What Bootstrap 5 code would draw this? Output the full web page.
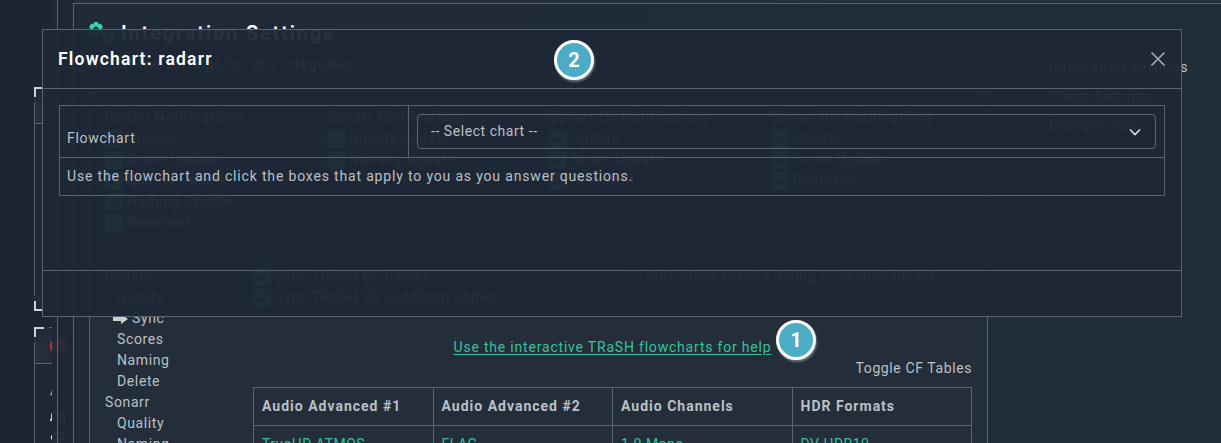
<!DOCTYPE html>
<html lang="en" data-bs-theme="dark">
<head>
<meta charset="utf-8">
<title>Integration Settings</title>
<meta name="viewport" content="width=device-width, initial-scale=1">
<link href="https://cdn.jsdelivr.net/npm/bootstrap@5.3.0/dist/css/bootstrap.min.css" rel="stylesheet">
<style>
:root{--line:#59626d;--txt:#bcc0c4;--mint:#34c39c}
body{font:14px/21px Roboto,"Liberation Sans",sans-serif;letter-spacing:.72px;color:var(--txt);background:linear-gradient(90deg,#1b2632,#1d2a36);height:443px;overflow:hidden;white-space:nowrap;position:relative}
.side{padding:87px 0 0 34px;width:300px;height:443px;overflow:hidden}
.widget{position:relative;border:1px solid var(--line);background:rgba(255,255,255,.01)}
.widget .cap{height:36px;border-bottom:1px solid var(--line);background:rgba(255,255,255,.03)}
.widget::before,.widget::after{content:"";position:absolute;left:-1px;width:15px;height:15px;background:linear-gradient(#cfd2d5,#cfd2d5) 0 0/10px 2px no-repeat,linear-gradient(#cfd2d5,#cfd2d5) 0 0/2px 10px no-repeat,#202b37}
.widget::before{top:-1px}
.widget::after{bottom:-1px;transform:scaleY(-1)}
.w1{height:224px;margin-bottom:16px}.w2{height:240px}
.outer{position:absolute;inset:0 0 0 52px;background:rgba(31,39,53,.96);padding-left:5px;overflow:hidden}
.pane{height:443px;border-left:1px solid var(--line);padding:3px 0 0 15px}
.page-pane{height:440px;border:solid var(--line);border-width:1px 0 0 1px;padding-left:15px;background:linear-gradient(90deg,#202a37,#202d39)}
.strip{height:3px;background:#25303c;position:absolute;top:0;left:22px;right:0}
.title{font-size:20px;font-weight:600;line-height:24px;color:#fff;letter-spacing:1.85px;padding-top:17px;height:50px}
.sub{height:37px;letter-spacing:.88px}
.box{width:899px;height:352px;overflow:hidden;border:1px solid var(--line);border-bottom:0;background:#242e3b;padding:15px 15px 0;position:relative}
.box::before,.box::after{content:"";position:absolute;top:-1px;width:10px;height:10px;border:2px solid #cfd2d5;border-bottom:0}
.box::before{left:-1px;border-right:0}.box::after{right:-1px;border-left:0}
.cols{display:grid;grid-template-columns:repeat(4,222px);height:127px}
.chk{display:flex;align-items:center;height:21px;gap:4px}
.chk i{width:18px;height:18px;border-radius:3px;background:#20b98c;display:inline-flex;align-items:center;justify-content:center;flex:none}
.chk i.off{background:transparent;border:1px solid var(--line)}
.rule{height:1px;background:var(--line);margin:14px 0 17px}
.menu{width:148px;letter-spacing:.62px}.menu .in{padding-left:12px}
.opts{display:grid;grid-template-columns:370px 348px;height:42px}
.help{color:var(--mint);text-decoration:underline;text-underline-offset:2px;letter-spacing:.8px}
.toggle{letter-spacing:.6px;margin-bottom:8px}
.cf{width:719px;table-layout:fixed;border-collapse:collapse}
.cf th,.cf td{border:1px solid #5d6470;height:38px;padding:0 8px;width:25%}
.cf th{font-weight:700;letter-spacing:1px}.cf td{color:var(--mint);letter-spacing:.5px}
.rnav{padding-left:61px;padding-top:53px;letter-spacing:.88px}
.rnav div{height:29px}
.dlg{position:absolute;left:42px;top:29px;width:1140px;height:288px;background:rgba(31,39,53,.95);border:1px solid var(--line)}
.dlg-head{height:59px;border-bottom:1px solid var(--line);padding:0 15px;color:#fff}
.dlg-head b{font-size:17.5px;font-weight:600;letter-spacing:1.2px}
.dlg-body{height:182px;border-bottom:1px solid var(--line);padding:16px}
.grid-t{border:1px solid var(--line);height:91px;width:1106px}
.grid-t .r1{height:52px;border-bottom:1px solid var(--line)}
.grid-t .c1{width:349px;border-right:1px solid var(--line);padding:11px 0 0 7px;line-height:42px;height:51px}
.note{padding:8px 7px;letter-spacing:.83px}
.pick{margin:8px;flex:1;height:35px;border:1px solid #5c6570;border-radius:4px;padding:0 14px 0 13px;letter-spacing:.55px}
.pin{position:absolute;width:40px;height:40px;border-radius:50%;border:3px solid #fff;background:#4bacc6;color:#fff;font-weight:700;font-size:20px;letter-spacing:0;display:flex;align-items:center;justify-content:center;box-shadow:1px 2px 2px rgba(190,190,190,.45)}
</style>
<script src="https://cdn.jsdelivr.net/npm/bootstrap@5.3.0/dist/js/bootstrap.bundle.min.js"></script>
</head>
<body>
<svg width="0" height="0" class="position-absolute"><defs>
<symbol id="tick" viewBox="0 0 12 12"><path d="M2 6.200 4.800 9 10 3.500" fill="none" stroke="#152029" stroke-width="2.200"/></symbol>
<symbol id="gear" viewBox="0 0 14 14"><path fill-rule="evenodd" fill="#3cd2a5" d="M5 0h4l.5 2.200 2.300-.6L14 5l-1.700 2L14 9l-2.200 3.400-2.300-.6L9 14H5l-.5-2.200-2.300.6L0 9l1.700-2L0 5l2.200-3.400 2.300.6zM7 4.500a2.500 2.500 0 1 0 0 5 2.500 2.500 0 0 0 0-5z"/></symbol>
</defs></svg>

<div class="side">
  <div class="widget w1"><div class="cap"></div></div>
  <div class="widget w2"><div class="cap d-flex align-items-center" style="padding-left:15px">
    <svg width="20" height="20" viewBox="0 0 20 20"><circle cx="10" cy="10" r="10" fill="#e5262b"/><ellipse cx="10" cy="11.500" rx="6" ry="4.300" fill="none" stroke="#fff" stroke-width="1.300"/><circle cx="7.500" cy="11" r="1.100" fill="#fff"/><circle cx="12.500" cy="11" r="1.100" fill="#fff"/><path d="M7.500 13.500q2.500 1.500 5 0M10 7l1-4 3 .7" stroke="#fff" fill="none"/><circle cx="14.500" cy="4" r="1.200" fill="#fff"/></svg></div>
    <div class="pt-3" style="padding-left:15px"><div>/r/organizr</div>
      <svg class="d-block" style="margin-top:8px" width="16" height="36" viewBox="0 0 16 36" fill="none" stroke="#ddd" stroke-width="1.700"><path d="M2 9 1 11l3-1.500h3a4 3.500 0 1 0-5-3zM11 5a3.500 3.500 0 0 1 3 5l1 2.500-3-1a4 3 0 0 1-5-1M7 27l3-3a3 3 0 0 1 4 4l-3 3a3 3 0 0 1-4-1M9 28l-3 3a3 3 0 0 1-4-4l3-3a3 3 0 0 1 4 1"/></svg></div>
  </div>
</div>

<div class="outer"><div class="strip"></div><div class="pane"><div class="page-pane d-flex">
  <div>
    <div class="title d-flex"><svg width="28" height="22" viewBox="0 0 28 22" style="margin-right:4px;margin-top:1px"><use href="#gear" width="14" height="14"/><use href="#gear" x="13" y="8" width="13" height="13"/></svg>Integration Settings</div>
    <div class="sub">Adjust the settings for this integration</div>
    <div class="box">
      <div class="cols">
        <div>Radarr Notifications
          <div class="chk"><i><svg width="12" height="12"><use href="#tick"/></svg></i>Update</div>
          <div class="chk"><i><svg width="12" height="12"><use href="#tick"/></svg></i>Score Update</div>
          <div class="chk"><i><svg width="12" height="12"><use href="#tick"/></svg></i>Quality Update</div>
          <div class="chk"><i><svg width="12" height="12"><use href="#tick"/></svg></i>Naming Update</div>
          <div class="chk"><i><svg width="12" height="12"><use href="#tick"/></svg></i>Removed</div></div>
        <div>Sonarr Notifications
          <div class="chk"><i><svg width="12" height="12"><use href="#tick"/></svg></i>Quality Update</div>
          <div class="chk"><i><svg width="12" height="12"><use href="#tick"/></svg></i>Naming Update</div></div>
        <div>Sonarr CF Notifications
          <div class="chk"><i><svg width="12" height="12"><use href="#tick"/></svg></i>Update</div>
          <div class="chk"><i><svg width="12" height="12"><use href="#tick"/></svg></i>Score Update</div>
          <div class="chk"><i><svg width="12" height="12"><use href="#tick"/></svg></i>Removed</div></div>
        <div>Sonarr RP Notifications
          <div class="chk"><i><svg width="12" height="12"><use href="#tick"/></svg></i>Update</div>
          <div class="chk"><i><svg width="12" height="12"><use href="#tick"/></svg></i>Score Update</div>
          <div class="chk"><i><svg width="12" height="12"><use href="#tick"/></svg></i>Removed</div></div>
      </div>
      <div class="rule"></div>
      <div class="d-flex">
        <div class="menu"><div>Radarr</div><div class="in">Quality</div>
          <div class="d-flex align-items-center" style="padding-left:8px"><svg width="15" height="12" viewBox="0 0 15 12" class="me-1"><path d="M0 4h8V1l7 5-7 5V8H0z" fill="#ced1d4"/></svg>Sync</div>
          <div class="in">Scores</div><div class="in">Naming</div><div class="in">Delete</div><div>Sonarr</div><div class="in">Quality</div><div class="in">Naming</div></div>
        <div>
          <div class="opts"><div class="chk"><i><svg width="12" height="12"><use href="#tick"/></svg></i>Sync TRaSH CF names</div><div class="chk"><i class="off"></i>Auto close results dialog (2 second delay)</div>
          <div class="chk"><i><svg width="12" height="12"><use href="#tick"/></svg></i>Sync TRaSH CF condition names</div></div>
          <div class="text-center" style="padding-top:29px"><a class="help" href="#">Use the interactive TRaSH flowcharts for help</a></div>
          <div class="text-end toggle">Toggle CF Tables</div>
          <table class="cf"><tr><th>Audio Advanced #1</th><th>Audio Advanced #2</th><th>Audio Channels</th><th>HDR Formats</th></tr>
          <tr><td>TrueHD ATMOS</td><td>FLAC</td><td>1.0 Mono</td><td>DV HDR10</td></tr></table>
        </div>
      </div>
    </div>
  </div>
  <div class="rnav"><div>Integration Settings</div><div>Client Settings</div><div>Custom Icon</div></div>
</div></div></div>

<div class="dlg">
  <div class="dlg-head d-flex align-items-center justify-content-between"><b>Flowchart: radarr</b>
    <svg width="16" height="16" viewBox="0 0 16 16"><path d="m1.500 1.500 13 13m0-13-13 13" stroke="#a4a8ad" stroke-width="1.700"/></svg></div>
  <div class="dlg-body"><div class="grid-t">
    <div class="r1 d-flex"><div class="c1">Flowchart</div>
      <div class="pick d-flex align-items-center justify-content-between"><span>-- Select chart --</span><svg width="12" height="8" viewBox="0 0 12 8"><path d="m1 1.500 5 5 5-5" fill="none" stroke="#ddd" stroke-width="1.700"/></svg></div></div>
    <div class="note">Use the flowchart and click the boxes that apply to you as you answer questions.</div>
  </div></div>
</div>
<div class="pin" style="left:554px;top:40px">2</div>
<div class="pin" style="left:776px;top:320px">1</div>
</body>
</html>
